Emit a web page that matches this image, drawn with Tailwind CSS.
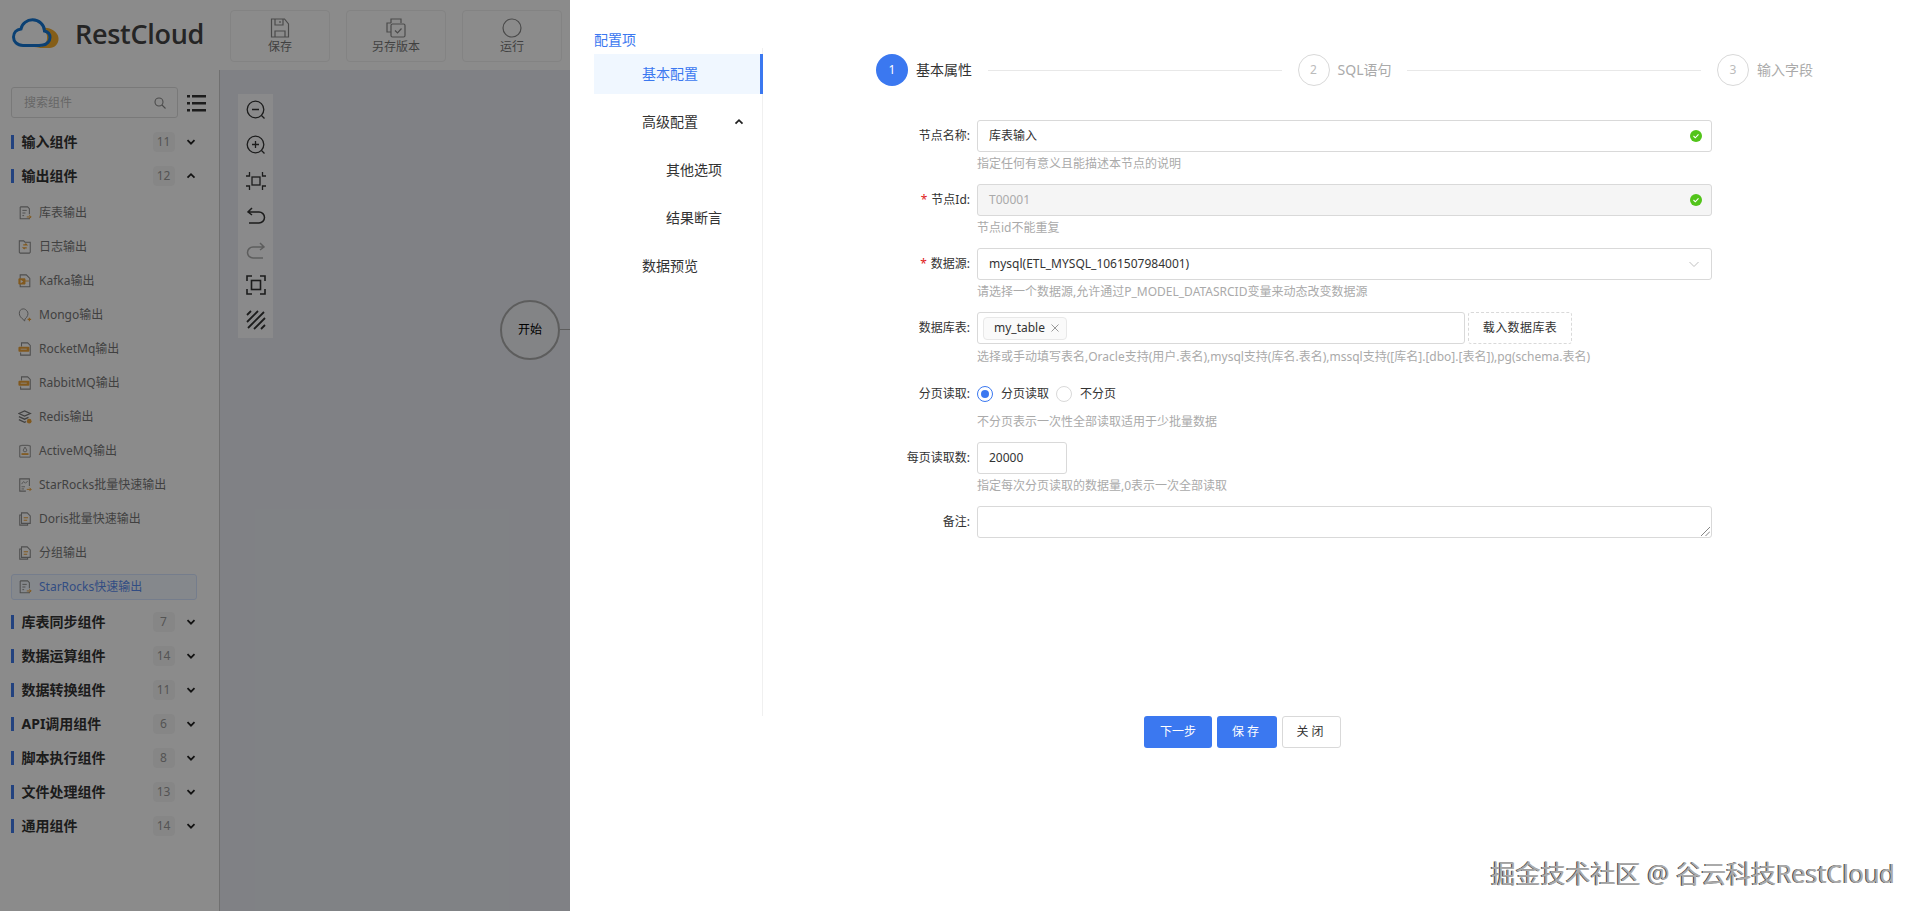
<!DOCTYPE html>
<html lang="zh-CN">
<head>
  <meta charset="UTF-8">
  <title>RestCloud - 库表输入</title>
  <script src="https://cdn.jsdelivr.net/npm/@tailwindcss/browser@4"></script>
</head>
<body class="relative h-[911px] overflow-hidden bg-white text-xs text-[#333] [font-family:'Noto_Sans','Noto_Sans_CJK_SC',sans-serif]">

  <svg class="hidden">
    <symbol id="doc" viewBox="0 0 16 16" fill="none">
      <path d="M2.5 1h8.5l2 2v6.5M13 13v1.500H2.500V1" stroke="#8e8e8e" stroke-width="1.200"/>
      <path d="M5 5h5M5 8h3.500M5 11h2" stroke="#8e8e8e" stroke-width="1.100"/>
      <path d="M10 12.500h5M13 10.500l2 2-2 2" stroke="#eca33a" stroke-width="1.100"/>
    </symbol>
    <symbol id="folder" viewBox="0 0 16 16" fill="none">
      <path d="M1.500 1h5l1.500 1.500h6v11.500l-1 1H2.500l-1-1z" stroke="#8e8e8e" stroke-width="1.200"/>
      <path d="M6 5.500h4l-1.500-1.500M10 9H6l1.500 1.500" stroke="#eca33a" stroke-width="1.300"/>
    </symbol>
    <symbol id="kafka" viewBox="0 0 16 16" fill="none">
      <path d="M2.500 1h7l4 4v9.500h-11z" stroke="#8e8e8e" stroke-width="1.200"/>
      <path d="M1 5.500h7v6H1zM8 8l4.500 0" fill="#eca33a" stroke="#eca33a"/>
      <path d="M3 6.500v4l3-2z" fill="#fff"/>
    </symbol>
    <symbol id="leaf" viewBox="0 0 16 16" fill="none">
      <path d="M6 1C3 1 1.500 3.500 1.500 6c0 3 2 5.500 4.500 7l1.500 2 .5-2.500C11 10 12 7 11 4.500 10 2.500 8 1 6 1z" stroke="#8e8e8e" stroke-width="1.100"/>
      <path d="M13 11v4M11 13h4" stroke="#eca33a" stroke-width="1.300"/>
    </symbol>
    <symbol id="mq" viewBox="0 0 16 16" fill="none">
      <path d="M4 5V1h7l3 3v11H3v-3" stroke="#8e8e8e" stroke-width="1.200"/>
      <rect x="0.500" y="5.500" width="12.500" height="5.500" rx="1" fill="#eca33a"/>
      <path d="M3 8.200h7" stroke="#fff" stroke-width=".9"/>
    </symbol>
    <symbol id="redis" viewBox="0 0 16 16" fill="none">
      <path d="M1 4l6.500-3L14 4l-6.500 3zM1 7.500L7.500 10.500 12 8.500M1 11l6.500 3 1.500-.7" stroke="#777" stroke-width="1.500"/>
      <circle cx="12.800" cy="12.800" r="2.700" fill="#eca33a"/>
    </symbol>
    <symbol id="active" viewBox="0 0 16 16" fill="none">
      <path d="M2 2h2v-.5h8V2h2v13H2z" stroke="#8e8e8e" stroke-width="1.100"/>
      <path d="M4 10.500h8v2H4z" fill="#eca33a"/>
      <path d="M8 3.500L10 7a2 2 0 1 1-4 0z" stroke="#8e8e8e"/>
    </symbol>
    <symbol id="chart" viewBox="0 0 16 16" fill="none">
      <path d="M13 9V1H2v14h7" stroke="#8e8e8e" stroke-width="1.200"/>
      <path d="M4 7l2.500-3L8.500 6 11 3.500" stroke="#8e8e8e"/>
      <path d="M4 10h4M4 12.500h3" stroke="#8e8e8e"/>
      <path d="M10 13h5M13 11l2 2-2 2" stroke="#eca33a" stroke-width="1.100"/>
    </symbol>
    <symbol id="pages" viewBox="0 0 16 16" fill="none">
      <path d="M4 1h6.500L14 4.500V13H4zM4 3.500H2V15h9v-2" stroke="#8e8e8e" stroke-width="1.200"/>
      <path d="M6.500 6.500h5M6.500 9.500h4" stroke="#eca33a" stroke-width="1.200"/>
    </symbol>
    <symbol id="chev-d" viewBox="0 0 10 10" fill="none"><path d="M1.500 3.200L5 6.700l3.500-3.500" stroke="#222" stroke-width="1.800"/></symbol>
    <symbol id="chev-u" viewBox="0 0 10 10" fill="none"><path d="M1.500 6.700L5 3.200l3.500 3.500" stroke="#222" stroke-width="1.800"/></symbol>
    <symbol id="ok" viewBox="0 0 12 12"><circle cx="6" cy="6" r="6" fill="#52c41a"/><path d="M3.500 6l1.800 1.800 3.200-3.400" fill="none" stroke="#fff" stroke-width="1.100"/></symbol>
  </svg>

  <!-- page below the drawer -->
  <header class="flex h-[70px] bg-[#fefefe]">
    <div class="flex w-[230px] shrink-0 items-center pl-3 pb-[3px]">
      <svg class="h-[31px] w-[48px]" viewBox="0 0 48 31" fill="none">
        <path d="M31 10C38 9 46 14 46.500 20c.5 6-4 10-9 10H22c8 0 14-4 13-12-.5-3-2-6-4-8z" fill="#f2ab2c"/>
        <path d="M11 27.500C5 27.500 1.500 23.500 1.500 19c0-4.500 3-7.500 7.500-8C10 5.500 15 1.800 20.500 1.800 27 1.800 32.500 7 32.500 13c4 1 5.500 4 5.500 6.500 0 3.500-3 7-7 7.500-5 1-10 .5-20 .5z" stroke="#1476d2" stroke-width="3"/>
      </svg>
      <span class="ml-[15px] text-[27px] font-semibold leading-none tracking-[-0.3px] text-[#444] [font-family:'Open_Sans',sans-serif]">RestCloud</span>
    </div>
    <div class="flex pt-[10px] gap-[16px]">
      <div class="flex h-[52px] w-[100px] flex-col items-center rounded-sm border border-[#eee] pt-[7px] text-[#777]">
        <svg class="h-[20px] w-[20px]" viewBox="0 0 20 20" fill="none" stroke="#888" stroke-width="1.200"><path d="M1.500 1h13l4 5v13h-17z"/><path d="M5 1v6h8V1M10 3v2M5 19v-6h10v6"/></svg>
        <span class="mt-[1px]">保存</span>
      </div>
      <div class="flex h-[52px] w-[100px] flex-col items-center rounded-sm border border-[#eee] pt-[7px] text-[#777]">
        <svg class="h-[20px] w-[20px]" viewBox="0 0 20 20" fill="none" stroke="#888" stroke-width="1.200"><path d="M5 5V1h10v4M5 14H1V5h4"/><rect x="5" y="6" width="14" height="13" rx="1.500"/><path d="M9 12.500l2.500 2.500 4-4.500"/></svg>
        <span class="mt-[1px]">另存版本</span>
      </div>
      <div class="flex h-[52px] w-[100px] flex-col items-center rounded-sm border border-[#eee] pt-[7px] text-[#777]">
        <svg class="h-[20px] w-[20px]" viewBox="0 0 20 20" fill="none" stroke="#888" stroke-width="1.200"><circle cx="10" cy="10" r="9"/></svg>
        <span class="mt-[1px]">运行</span>
      </div>
    </div>
  </header>

  <div class="flex h-[841px]">
    <aside class="w-[220px] shrink-0 border-r border-[#ccc] bg-[#fefefe]">
      <div class="flex items-center pl-[11px] pt-[17px]">
        <div class="flex h-[31px] w-[167px] items-center justify-between rounded-[3px] border border-[#ddd] pl-3 pr-[11px] text-[#bbb]">
          <span>搜索组件</span>
          <svg class="h-3 w-3" viewBox="0 0 12 12" fill="none" stroke="#888" stroke-width="1.100"><circle cx="5" cy="5" r="4"/><path d="M8 8l3.500 3.500"/></svg>
        </div>
        <svg class="ml-[9px] h-[18px] w-[19px]" viewBox="0 0 19 18" fill="#333"><rect y="1" width="3" height="2.500"/><rect x="5" y="1" width="14" height="2.500"/><rect y="8" width="3" height="2.500"/><rect x="5" y="8" width="14" height="2.500"/><rect y="15" width="3" height="2.500"/><rect x="5" y="15" width="14" height="2.500"/></svg>
      </div>

      <div class="mt-[7px]">
        <div class="flex h-[34px] items-center pl-[11px]">
          <i class="h-[14px] w-[2.500px] bg-[#3f78e8]"></i>
          <span class="ml-[8px] w-[131px] text-sm font-bold">输入组件</span>
          <span class="flex h-5 w-[22px] items-center justify-center rounded-sm bg-[#f5f5f5] text-[#999]">11</span>
          <svg class="ml-[11px] h-[10px] w-[10px]"><use href="#chev-d"/></svg>
        </div>
        <div class="flex h-[34px] items-center pl-[11px]">
          <i class="h-[14px] w-[2.500px] bg-[#3f78e8]"></i>
          <span class="ml-[8px] w-[131px] text-sm font-bold">输出组件</span>
          <span class="flex h-5 w-[22px] items-center justify-center rounded-sm bg-[#f5f5f5] text-[#999]">12</span>
          <svg class="ml-[11px] h-[10px] w-[10px]"><use href="#chev-u"/></svg>
        </div>

        <ul class="pt-[3px] pb-px text-[#777]">
          <li class="flex h-[34px] items-center gap-[7px] pl-[18px]"><svg class="h-[14px] w-[14px]"><use href="#doc"/></svg>库表输出</li>
          <li class="flex h-[34px] items-center gap-[7px] pl-[18px]"><svg class="h-[14px] w-[14px]"><use href="#folder"/></svg>日志输出</li>
          <li class="flex h-[34px] items-center gap-[7px] pl-[18px]"><svg class="h-[14px] w-[14px]"><use href="#kafka"/></svg>Kafka输出</li>
          <li class="flex h-[34px] items-center gap-[7px] pl-[18px]"><svg class="h-[14px] w-[14px]"><use href="#leaf"/></svg>Mongo输出</li>
          <li class="flex h-[34px] items-center gap-[7px] pl-[18px]"><svg class="h-[14px] w-[14px]"><use href="#mq"/></svg>RocketMq输出</li>
          <li class="flex h-[34px] items-center gap-[7px] pl-[18px]"><svg class="h-[14px] w-[14px]"><use href="#mq"/></svg>RabbitMQ输出</li>
          <li class="flex h-[34px] items-center gap-[7px] pl-[18px]"><svg class="h-[14px] w-[14px]"><use href="#redis"/></svg>Redis输出</li>
          <li class="flex h-[34px] items-center gap-[7px] pl-[18px]"><svg class="h-[14px] w-[14px]"><use href="#active"/></svg>ActiveMQ输出</li>
          <li class="flex h-[34px] items-center gap-[7px] pl-[18px]"><svg class="h-[14px] w-[14px]"><use href="#chart"/></svg>StarRocks批量快速输出</li>
          <li class="flex h-[34px] items-center gap-[7px] pl-[18px]"><svg class="h-[14px] w-[14px]"><use href="#pages"/></svg>Doris批量快速输出</li>
          <li class="flex h-[34px] items-center gap-[7px] pl-[18px]"><svg class="h-[14px] w-[14px]"><use href="#pages"/></svg>分组输出</li>
          <li class="flex h-[34px] items-center">
            <div class="ml-[11px] flex h-[26px] w-[186px] items-center gap-[7px] rounded-[3px] border border-[#d6e4ff] bg-[#f3f8ff] pl-[6px] text-[#5b8def]"><svg class="h-[14px] w-[14px]"><use href="#doc"/></svg>StarRocks快速输出</div>
          </li>
        </ul>

        <div class="flex h-[34px] items-center pl-[11px]"><i class="h-[14px] w-[2.500px] bg-[#3f78e8]"></i><span class="ml-[8px] w-[131px] text-sm font-bold">库表同步组件</span><span class="flex h-5 w-[22px] items-center justify-center rounded-sm bg-[#f5f5f5] text-[#999]">7</span><svg class="ml-[11px] h-[10px] w-[10px]"><use href="#chev-d"/></svg></div>
        <div class="flex h-[34px] items-center pl-[11px]"><i class="h-[14px] w-[2.500px] bg-[#3f78e8]"></i><span class="ml-[8px] w-[131px] text-sm font-bold">数据运算组件</span><span class="flex h-5 w-[22px] items-center justify-center rounded-sm bg-[#f5f5f5] text-[#999]">14</span><svg class="ml-[11px] h-[10px] w-[10px]"><use href="#chev-d"/></svg></div>
        <div class="flex h-[34px] items-center pl-[11px]"><i class="h-[14px] w-[2.500px] bg-[#3f78e8]"></i><span class="ml-[8px] w-[131px] text-sm font-bold">数据转换组件</span><span class="flex h-5 w-[22px] items-center justify-center rounded-sm bg-[#f5f5f5] text-[#999]">11</span><svg class="ml-[11px] h-[10px] w-[10px]"><use href="#chev-d"/></svg></div>
        <div class="flex h-[34px] items-center pl-[11px]"><i class="h-[14px] w-[2.500px] bg-[#3f78e8]"></i><span class="ml-[8px] w-[131px] text-sm font-bold">API调用组件</span><span class="flex h-5 w-[22px] items-center justify-center rounded-sm bg-[#f5f5f5] text-[#999]">6</span><svg class="ml-[11px] h-[10px] w-[10px]"><use href="#chev-d"/></svg></div>
        <div class="flex h-[34px] items-center pl-[11px]"><i class="h-[14px] w-[2.500px] bg-[#3f78e8]"></i><span class="ml-[8px] w-[131px] text-sm font-bold">脚本执行组件</span><span class="flex h-5 w-[22px] items-center justify-center rounded-sm bg-[#f5f5f5] text-[#999]">8</span><svg class="ml-[11px] h-[10px] w-[10px]"><use href="#chev-d"/></svg></div>
        <div class="flex h-[34px] items-center pl-[11px]"><i class="h-[14px] w-[2.500px] bg-[#3f78e8]"></i><span class="ml-[8px] w-[131px] text-sm font-bold">文件处理组件</span><span class="flex h-5 w-[22px] items-center justify-center rounded-sm bg-[#f5f5f5] text-[#999]">13</span><svg class="ml-[11px] h-[10px] w-[10px]"><use href="#chev-d"/></svg></div>
        <div class="flex h-[34px] items-center pl-[11px]"><i class="h-[14px] w-[2.500px] bg-[#3f78e8]"></i><span class="ml-[8px] w-[131px] text-sm font-bold">通用组件</span><span class="flex h-5 w-[22px] items-center justify-center rounded-sm bg-[#f5f5f5] text-[#999]">14</span><svg class="ml-[11px] h-[10px] w-[10px]"><use href="#chev-d"/></svg></div>
      </div>
    </aside>

    <!-- flow canvas -->
    <main class="relative flex-1 bg-[#e9ecf2]">
      <div class="absolute left-[18px] top-[24px] flex h-[244px] w-[35px] flex-col items-center bg-[#fbfcfe] text-[#333]">
        <svg class="mt-[6px] h-5 w-5" viewBox="0 0 20 20" fill="none" stroke="#333" stroke-width="1.300"><circle cx="9.500" cy="9.500" r="8.300"/><path d="M6 9.500h7M15.500 15.500l3 3"/></svg>
        <svg class="mt-[15px] h-5 w-5" viewBox="0 0 20 20" fill="none" stroke="#333" stroke-width="1.300"><circle cx="9.500" cy="9.500" r="8.300"/><path d="M6 9.500h7M9.500 6v7M15.500 15.500l3 3"/></svg>
        <svg class="mt-[16px] h-5 w-5" viewBox="0 0 20 20" fill="none" stroke="#333" stroke-width="1.300"><rect x="6" y="6" width="8" height="8"/><path d="M0 5h3.500V1M16.500 1v4H20M0 15h3.500v4M16.500 19v-4H20"/></svg>
        <svg class="mt-[15px] h-5 w-5" viewBox="0 0 20 20" fill="none" stroke="#333" stroke-width="1.500"><path d="M2 6h11a5 5 0 0 1 0 11H3M6 2L2 6l4 3"/></svg>
        <svg class="mt-[15px] h-5 w-5" viewBox="0 0 20 20" fill="none" stroke="#aaa" stroke-width="1.500"><path d="M18 6H7a5 5 0 0 0 0 11h10M14 2l4 4-4 3"/></svg>
        <svg class="mt-[14px] h-5 w-5" viewBox="0 0 20 20" fill="none" stroke="#333" stroke-width="1.600"><rect x="5.500" y="5.500" width="9" height="9"/><path d="M1 6V1h5M14 1h5v5M1 14v5h5M14 19h5v-5"/></svg>
        <svg class="mt-[15px] h-5 w-5" viewBox="0 0 20 20" fill="none" stroke="#333" stroke-width="1.800"><path d="M1 5l4-4M1 12L12 1M2 18L18 2M8 19L19 8M15 19l4-4"/></svg>
      </div>
      <div class="absolute left-[280px] top-[230px] flex h-[60px] w-[60px] items-center justify-center rounded-full border-2 border-[#aaa] bg-[#eff1f5] text-xs text-black">开始</div>
      <div class="absolute left-[340px] top-[259px] h-px w-[30px] bg-[#aaa]"></div>
    </main>
  </div>

  <!-- mask -->
  <div class="absolute inset-0 bg-black/45"></div>

  <!-- config drawer -->
  <section class="absolute inset-y-0 left-[570px] right-0 bg-white">
    <div class="flex h-[716px]">
      <nav class="ml-6 flex w-[169px] shrink-0 flex-col">
        <div class="mt-[29px] h-[19px] text-sm leading-[22px] text-[#3b78f0]">配置项</div>
        <ul class="flex flex-1 flex-col gap-2 border-r border-[#f0f0f0] pt-[6px] text-sm">
          <li class="-mr-px flex h-10 items-center border-r-[3px] border-[#3b78f0] bg-[#f0f7ff] pl-12 text-[#3b78f0]">基本配置</li>
          <li class="flex h-10 items-center justify-between pl-12 pr-[18px]">高级配置<svg class="h-2.5 w-2.5"><use href="#chev-u"/></svg></li>
          <li class="flex h-10 items-center pl-[72px]">其他选项</li>
          <li class="flex h-10 items-center pl-[72px]">结果断言</li>
          <li class="flex h-10 items-center pl-12">数据预览</li>
        </ul>
      </nav>

      <div class="flex-1">
        <!-- steps -->
        <div class="ml-[113px] mt-[54px] flex h-8 w-[937px] items-center text-sm">
          <span class="flex h-8 w-8 items-center justify-center rounded-full bg-[#3b78f0] text-xs text-white">1</span>
          <span class="ml-2">基本属性</span>
          <i class="mx-4 h-px flex-1 bg-[#e8e8e8]"></i>
          <span class="flex h-8 w-8 items-center justify-center rounded-full border border-[#d9d9d9] text-xs text-[#bbb]">2</span>
          <span class="ml-2 text-[#aaa]">SQL语句</span>
          <i class="mx-4 h-px flex-1 bg-[#e8e8e8]"></i>
          <span class="flex h-8 w-8 items-center justify-center rounded-full border border-[#d9d9d9] text-xs text-[#bbb]">3</span>
          <span class="ml-2 text-[#aaa]">输入字段</span>
        </div>

        <!-- form -->
        <form class="ml-[137px] mt-[34px]">
          <div class="flex h-16">
            <label class="flex h-8 w-[70px] items-center justify-end">节点名称:</label>
            <div class="ml-[7px] w-[735px]">
              <div class="flex h-8 items-center justify-between rounded-[3px] border border-[#d9d9d9] pl-[11px] pr-[9px]"><span>库表输入</span><svg class="h-3 w-3"><use href="#ok"/></svg></div>
              <p class="mt-[3px] leading-[18px] text-[#aaa]">指定任何有意义且能描述本节点的说明</p>
            </div>
          </div>
          <div class="flex h-16">
            <label class="flex h-8 w-[70px] items-center justify-end"><span class="mr-1 text-[#e02020]">*</span>节点Id:</label>
            <div class="ml-[7px] w-[735px]">
              <div class="flex h-8 items-center justify-between rounded-[3px] border border-[#d9d9d9] bg-[#f5f5f5] pl-[11px] pr-[9px] text-[#aaa]"><span>T00001</span><svg class="h-3 w-3"><use href="#ok"/></svg></div>
              <p class="mt-[3px] leading-[18px] text-[#aaa]">节点id不能重复</p>
            </div>
          </div>
          <div class="flex h-16">
            <label class="flex h-8 w-[70px] items-center justify-end"><span class="mr-1 text-[#e02020]">*</span>数据源:</label>
            <div class="ml-[7px] w-[735px]">
              <div class="flex h-8 items-center justify-between rounded-[3px] border border-[#d9d9d9] pl-[11px] pr-[12px]"><span>mysql(ETL_MYSQL_1061507984001)</span><svg class="h-2.5 w-2.5" viewBox="0 0 10 10" fill="none" stroke="#bfbfbf"><path d="M.5 3l4.500 4.500L9.500 3"/></svg></div>
              <p class="mt-[3px] leading-[18px] text-[#aaa]">请选择一个数据源,允许通过P_MODEL_DATASRCID变量来动态改变数据源</p>
            </div>
          </div>
          <div class="flex h-[66px]">
            <label class="flex h-8 w-[70px] items-center justify-end">数据库表:</label>
            <div class="ml-[7px] w-[735px]">
              <div class="flex items-start">
                <div class="flex h-8 w-[488px] items-center rounded-[3px] border border-[#d9d9d9] pl-[5px]">
                  <span class="flex h-[23px] w-[84px] items-center rounded-sm border border-[#e8e8e8] bg-[#fafafa] pl-[10px]">my_table<svg class="ml-[6px] h-2 w-2" viewBox="0 0 8 8" fill="none" stroke="#999"><path d="M.5.5l7 7M7.500.5l-7 7"/></svg></span>
                </div>
                <span class="ml-[3px] flex h-8 w-[104px] items-center justify-center rounded-[3px] border border-dashed border-[#d9d9d9] tracking-[0.4px]">载入数据库表</span>
              </div>
              <p class="mt-[4px] whitespace-nowrap leading-[18px] text-[#aaa]">选择或手动填写表名,Oracle支持(用户.表名),mysql支持(库名.表名),mssql支持([库名].[dbo].[表名]),pg(schema.表名)</p>
            </div>
          </div>
          <div class="flex h-16">
            <label class="flex h-8 w-[70px] items-center justify-end">分页读取:</label>
            <div class="ml-[7px] w-[735px]">
              <div class="flex h-8 items-center">
                <span class="flex h-4 w-4 items-center justify-center rounded-full border border-[#3b78f0]"><i class="h-2 w-2 rounded-full bg-[#3b78f0]"></i></span>
                <span class="ml-[8px] w-[55px]">分页读取</span>
                <span class="h-4 w-4 rounded-full border border-[#d9d9d9]"></span>
                <span class="ml-[8px]">不分页</span>
              </div>
              <p class="mt-[3px] leading-[18px] text-[#aaa]">不分页表示一次性全部读取适用于少批量数据</p>
            </div>
          </div>
          <div class="flex h-16">
            <label class="flex h-8 w-[70px] items-center justify-end">每页读取数:</label>
            <div class="ml-[7px] w-[735px]">
              <div class="flex h-8 w-[90px] items-center rounded-[3px] border border-[#d9d9d9] pl-[11px]">20000</div>
              <p class="mt-[3px] leading-[18px] text-[#aaa]">指定每次分页读取的数据量,0表示一次全部读取</p>
            </div>
          </div>
          <div class="flex h-16">
            <label class="flex h-8 w-[70px] items-center justify-end">备注:</label>
            <div class="relative ml-[7px] h-8 w-[735px] rounded-[3px] border border-[#d9d9d9]">
              <svg class="absolute bottom-px right-px h-[9px] w-[9px]" viewBox="0 0 9 9" fill="none" stroke="#666" stroke-width=".8"><path d="M0 9l9-9M4.500 9L9 4.500"/></svg>
            </div>
          </div>
        </form>
      </div>
    </div>

    <div class="flex justify-center gap-[5px] pr-[5px]">
      <button class="h-8 w-[68px] rounded-[3px] bg-[#3b78f0] text-white">下一步</button>
      <button class="h-8 w-[60px] rounded-[3px] bg-[#3b78f0] tracking-[3px] text-white">保存</button>
      <button class="h-8 w-[59px] rounded-[3px] border border-[#d9d9d9] tracking-[3px]">关闭</button>
    </div>

    <span class="absolute bottom-[21px] right-[25px] text-[25px] leading-[34px] text-[#aaa] [text-shadow:-1px_0_0_#444]">掘金技术社区 @ 谷云科技RestCloud</span>
  </section>
</body>
</html>
